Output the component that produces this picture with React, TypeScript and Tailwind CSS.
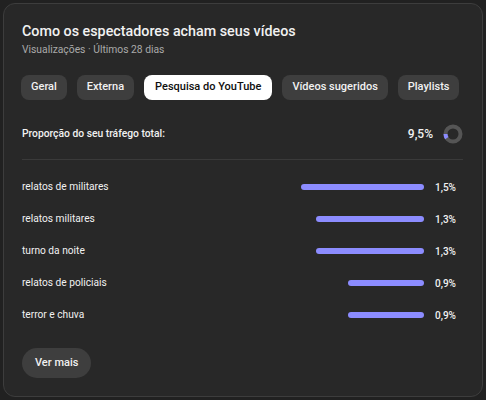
const tabs = ["Geral", "Externa", "Pesquisa do YouTube", "Vídeos sugeridos", "Playlists"]

const rows = [
  { term: "relatos de militares", value: "1,5%", width: 123 },
  { term: "relatos militares", value: "1,3%", width: 108 },
  { term: "turno da noite", value: "1,3%", width: 108 },
  { term: "relatos de policiais", value: "0,9%", width: 76 },
  { term: "terror e chuva", value: "0,9%", width: 76 },
]

function Donut() {
  // 9,5% arc starting at 9 o'clock, going down
  const r = 7.5
  const a = 0.095 * 2 * Math.PI
  const x1 = 10 - r
  const y1 = 10
  const x2 = 10 - r * Math.cos(a)
  const y2 = 10 + r * Math.sin(a)
  return (
    <svg width="20" height="20" viewBox="0 0 20 20">
      <circle cx="10" cy="10" r={r} fill="none" stroke="#555555" strokeWidth="4" />
      <path d={`M ${x1} ${y1} A ${r} ${r} 0 0 0 ${x2} ${y2}`} fill="none" stroke="#8c8cff" strokeWidth="4" />
    </svg>
  )
}

export default function App() {
  return (
    <div className="w-[486px] h-[400px] bg-[#212121] p-[3px]" style={{ fontFamily: "Roboto, sans-serif" }}>
      <div className="h-[394px] rounded-xl border border-[#3d3d3d] bg-[#282828] pl-[18px] pr-[19px] pt-[17px]">
        <h1 className="text-[14.3px] leading-[20px] font-medium text-[#f1f1f1]">Como os espectadores acham seus vídeos</h1>
        <p className="mt-[2px] text-[10.3px] leading-[14px] text-[#aaaaaa]">Visualizações · Últimos 28 dias</p>

        <div className="mt-[18px] flex gap-[10px] -ml-px">
          {tabs.map((t) =>
            t === "Pesquisa do YouTube" ? (
              <span key={t} className="h-[25px] px-[11px] flex items-center whitespace-nowrap rounded-lg bg-white text-[#0f0f0f] text-[11px] font-medium">
                {t}
              </span>
            ) : (
              <span key={t} className="h-[25px] px-[10px] flex items-center whitespace-nowrap rounded-lg bg-[#3e3e3e] text-[#f1f1f1] text-[11px] font-medium">
                {t}
              </span>
            )
          )}
        </div>

        <div className="mt-[24px] h-[20px] flex items-center justify-between">
          <span className="text-[10.3px] font-medium text-[#f1f1f1]">Proporção do seu tráfego total:</span>
          <div className="flex items-center gap-[10px]">
            <span className="text-[12px] font-medium text-[#f1f1f1]">9,5%</span>
            <Donut />
          </div>
        </div>

        <div className="mt-[15px] border-t border-[#3a3a3a]" />

        <div className="mt-[11px] flex flex-col">
          {rows.map((r) => (
            <div key={r.term} className="h-[32px] flex items-center">
              <span className="flex-1 text-[10.2px] text-[#f1f1f1]">{r.term}</span>
              <div className="w-[123px] flex justify-end">
                <div className="h-[6px] rounded-full bg-[#8c8cff]" style={{ width: r.width }} />
              </div>
              <span className="w-[39px] pl-[11px] text-[10px] font-medium text-[#f1f1f1]">{r.value}</span>
            </div>
          ))}
        </div>

        <button className="mt-[17px] h-[30px] px-[13px] rounded-full bg-[#3e3e3e] text-[11px] font-medium text-[#f1f1f1]">
          Ver mais
        </button>
      </div>
    </div>
  )
}
